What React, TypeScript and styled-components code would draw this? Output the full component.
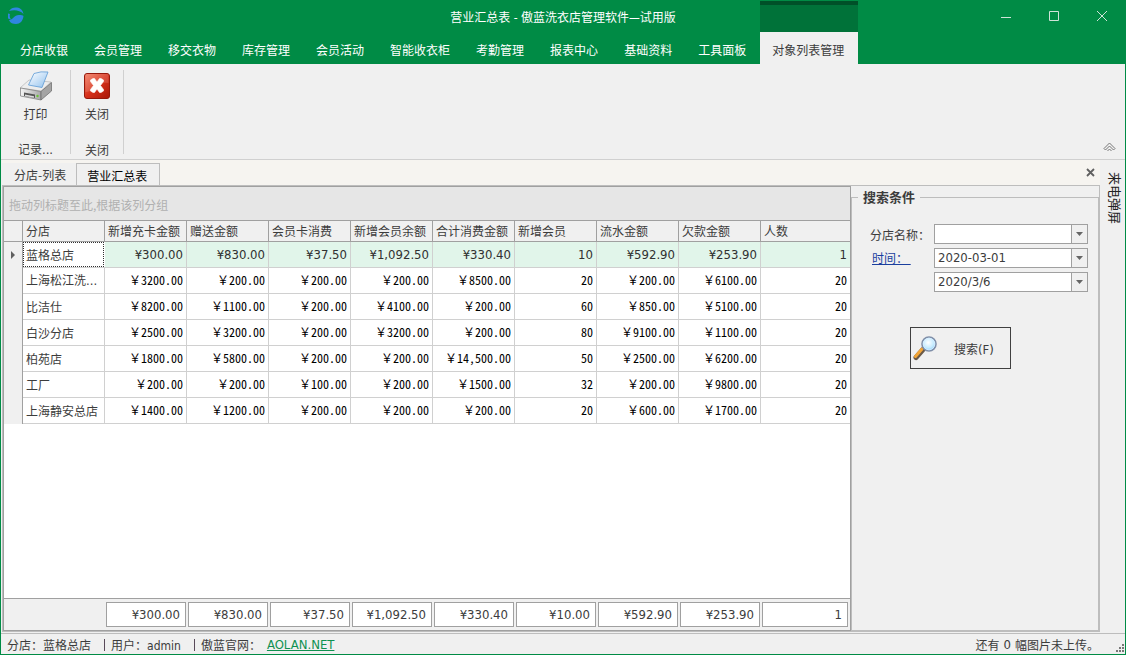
import React from "react";
import styled, { createGlobalStyle } from "styled-components";

const green = "#008b45";
const line = "#a0a0a0";
const softLine = "#bdbdbd";
const face = "#f0f0f0";
const cjk = `"Noto Sans CJK SC", sans-serif`;
const latin = `"DejaVu Sans Condensed", "Noto Sans CJK SC", sans-serif`;
const columnWidths = "82px 82px 82px 82px 82px 82px 82px 82px 1fr";

const GlobalStyle = createGlobalStyle`
  *, *::before, *::after { box-sizing: border-box; }
  body {
    margin: 0;
    background: ${face};
    color: #3c3c3c;
    font-family: ${cjk};
    font-size: 12px;
    line-height: 16px;
  }
  button, select { font: inherit; color: inherit; }
`;

const Window = styled.div`
  display: flex;
  flex-direction: column;
  min-height: 100vh;
  border: 1px solid ${green};
  border-top: 0;
  background: ${face};
`;

const TitleBar = styled.header`
  display: grid;
  grid-template-columns: 1fr auto 1fr;
  align-items: center;
  height: 32px;
  background: ${green};
  color: #fff;
`;

const Title = styled.h1`
  margin: 0;
  padding-top: 3px;
  font-family: ${latin};
  font-size: 12px;
  font-weight: 400;
`;

const WindowButtons = styled.div`
  display: flex;
  justify-content: flex-end;
`;

const WindowButton = styled.button`
  display: grid;
  place-items: center;
  width: 48px;
  height: 32px;
  padding: 0 0 0 2px;
  border: 0;
  background: transparent;
  color: #cfe3d8;
`;

const MenuBar = styled.nav`
  display: flex;
  height: 32px;
  padding-left: 7px;
  background: ${green};
`;

const MenuTab = styled.button<{ $active?: boolean }>`
  position: relative;
  padding: 4px 14px 0 12px;
  border: 0;
  white-space: nowrap;
  background: ${(p) => (p.$active ? face : "transparent")};
  color: ${(p) => (p.$active ? "#3c3c3c" : "#fff")};
  &::before {
    content: "";
    display: ${(p) => (p.$active ? "block" : "none")};
    position: absolute;
    left: 0;
    right: 0;
    bottom: 100%;
    height: 31px;
    border-top: 4px solid #005028;
    background: #007239;
  }
`;

const Ribbon = styled.section`
  display: flex;
  height: 96px;
  padding: 6px 0;
  border-bottom: 1px solid #d0d0d0;
`;

const RibbonGroup = styled.div<{ $width: number }>`
  display: flex;
  flex-direction: column;
  align-items: center;
  justify-content: space-between;
  width: ${(p) => p.$width}px;
  height: 84px;
  border-right: 1px solid #d0d0d0;
`;

const RibbonButton = styled.button`
  display: flex;
  flex-direction: column;
  align-items: center;
  gap: 4px;
  padding: 0;
  border: 0;
  background: transparent;
`;

const GroupCaption = styled.span`
  line-height: 8px;
`;

const CollapseButton = styled.button`
  align-self: flex-end;
  margin-left: auto;
  padding: 0 9px 0 0;
  border: 0;
  background: transparent;
  line-height: 0;
`;

const Middle = styled.div`
  display: flex;
  flex: 1;
`;

const Workspace = styled.main`
  display: flex;
  flex: 1;
  flex-direction: column;
  min-width: 0;
  padding: 0 1px 1px;
`;

const TabStrip = styled.div`
  display: flex;
  align-items: flex-end;
  height: 25px;
  background: #f6f4f0;
`;

const DocTab = styled.button<{ $active?: boolean }>`
  height: ${(p) => (p.$active ? 23 : 22)}px;
  margin-bottom: ${(p) => (p.$active ? -1 : 0)}px;
  padding: ${(p) => (p.$active ? "1px 12px 0 10px" : "2px 10px 0 12px")};
  border: solid ${softLine};
  border-width: ${(p) => (p.$active ? "1px 1px 0" : "0")};
  background: ${face};
  color: ${(p) => (p.$active ? "#000" : "#3c3c3c")};
  white-space: nowrap;
`;

const CloseTab = styled.button`
  align-self: center;
  margin-left: auto;
  padding: 0 5px 0 0;
  border: 0;
  background: transparent;
  line-height: 0;
`;

const Panels = styled.div`
  display: flex;
  flex: 1;
  border: 1px solid ${softLine};
`;

const GridPanel = styled.section`
  display: flex;
  flex: 1;
  flex-direction: column;
  min-width: 0;
  border: 1px solid ${line};
  background: #fff;
`;

const GroupHint = styled.div`
  height: 33px;
  padding: 10px 5px 0;
  background: #e6e6e6;
  color: #b0b0b0;
`;

const DataTable = styled.table`
  width: 100%;
  border-spacing: 0;
  border-top: 1px solid ${line};
  table-layout: fixed;
`;

const HeadCell = styled.th`
  height: 21px;
  padding: 0 3px;
  border-right: 1px solid ${line};
  border-bottom: 1px solid ${line};
  background: ${face};
  font-weight: 400;
  text-align: left;
  white-space: nowrap;
  &:last-child { border-right: 0; }
`;

const MarkCell = styled.td`
  padding: 0;
  border-right: 1px solid ${line};
  background: ${face};
  text-align: center;
  line-height: 0;
`;

const NameCell = styled.td<{ $focused?: boolean }>`
  height: 26px;
  padding: 0 0 0 ${(p) => (p.$focused ? 0 : 3)}px;
  border-right: ${(p) => (p.$focused ? "0" : "1px solid #d0d0d0")};
  border-bottom: 1px solid #d0d0d0;
  white-space: nowrap;
`;

const FocusFrame = styled.div`
  height: 25px;
  margin-right: 1px;
  padding: 4px 0 0 2px;
  border: 1px dotted #303030;
`;

const AmountCell = styled.td<{ $selected?: boolean }>`
  height: 26px;
  padding: 0 3px ${(p) => (p.$selected ? 0 : 1)}px 0;
  border-right: 1px solid #d0d0d0;
  border-bottom: 1px solid #d0d0d0;
  background: ${(p) => (p.$selected ? "#e1f5ea" : "#fff")};
  color: ${(p) => (p.$selected ? "#303030" : "#000")};
  font-family: ${(p) => (p.$selected ? latin : cjk)};
  font-size: ${(p) => (p.$selected ? 13 : 12)}px;
  font-feature-settings: ${(p) => (p.$selected ? "normal" : '"hwid"')};
  text-align: right;
  white-space: nowrap;
  &:last-child { border-right: 0; }
`;

const Yen = styled.span`
  font-feature-settings: normal;
`;

const SummaryBar = styled.div`
  display: grid;
  grid-template-columns: ${columnWidths};
  height: 32px;
  margin-top: auto;
  padding: 3px 1px 3px 101px;
  border-top: 1px solid ${line};
  background: ${face};
`;

const SummaryBox = styled.div`
  height: 25px;
  margin: 0 1px;
  padding: 4px 5px 0 0;
  border: 1px solid ${line};
  background: #fff;
  font-family: ${latin};
  font-size: 13px;
  text-align: right;
`;

const SearchPanel = styled.aside`
  display: flex;
  flex-direction: column;
  width: 248px;
`;

const SearchGroup = styled.fieldset`
  flex: 1;
  min-width: 0;
  margin: 3px 0 0;
  padding: 0 10px 0 6px;
  border: 1px solid ${softLine};
`;

const SearchTitle = styled.legend`
  padding: 0 5px;
  font-size: 13px;
  font-weight: 700;
`;

const Fields = styled.div`
  display: grid;
  grid-template-columns: 64px 1fr;
  row-gap: 4px;
  align-items: center;
  padding: 19px 0 0 12px;
`;

const FieldLabel = styled.label`
  padding-top: 2px;
  white-space: nowrap;
`;

const TimeLink = styled.a`
  justify-self: start;
  margin-left: 2px;
  color: #1a3f9e;
  text-decoration: underline;
  white-space: pre;
`;

const SelectFrame = styled.div`
  position: relative;
  grid-column: 2;
  height: 20px;
`;

const Select = styled.select`
  appearance: none;
  width: 100%;
  height: 20px;
  padding: 0 20px 0 3px;
  border: 1px solid ${line};
  border-radius: 0;
  background: #fff;
  font-family: ${latin};
  font-size: 13px;
`;

const SelectArrow = styled.span`
  position: absolute;
  top: 1px;
  right: 1px;
  bottom: 1px;
  display: grid;
  place-items: center;
  width: 16px;
  border-left: 1px solid ${line};
  background: ${face};
  pointer-events: none;
`;

const SearchButton = styled.button`
  display: flex;
  align-items: center;
  gap: 16px;
  width: 101px;
  height: 42px;
  margin: 35px 0 0 52px;
  padding: 0 0 0 1px;
  border: 1px solid #404040;
  background: ${face};
`;

const SearchText = styled.span`
  padding-top: 2px;
`;

const LatinText = styled.span<{ $size?: number }>`
  font-family: ${latin};
  font-size: ${(p) => p.$size ?? 13}px;
`;

const SideDock = styled.div`
  width: 24px;
  padding: 12px 0 0 6px;
`;

const DockTab = styled.button`
  padding: 0;
  border: 0;
  background: transparent;
  color: #222;
  font-size: 13px;
  line-height: 16px;
  writing-mode: vertical-rl;
  text-orientation: sideways;
`;

const StatusBar = styled.footer`
  display: flex;
  align-items: center;
  height: 21px;
  padding: 2px 0 0 6px;
  border-top: 1px solid ${softLine};
  white-space: nowrap;
`;

const StatusItem = styled.span`
  margin-right: 13px;
`;

const Separator = styled.i`
  width: 1px;
  height: 12px;
  margin-right: 6px;
  background: #5a4a5a;
`;

const SiteLink = styled.a`
  margin-left: 6px;
  color: #0f9150;
  font-family: ${latin};
  font-size: 13px;
`;

const Uploads = styled.span`
  display: flex;
  gap: 4px;
  margin-left: auto;
  margin-right: 17px;
`;

const Grip = styled.svg`
  align-self: flex-end;
  margin-bottom: 1px;
`;

const LogoMark = styled.svg`
  margin-left: 6px;
`;

const Logo = () => (
  <LogoMark width="18" height="18" viewBox="0 0 18 18" role="img" aria-label="傲蓝">
    <path d="M2 4C4 1 7 0 10 .500c4 .5 6 3.500 6.500 6.500C13 3 7 2.500 2 4Z" fill="#2f86e0" />
    <path d="M1 6.500v5l3 1C2.500 10.500 2.500 8.500 3 7Z" fill="#2f86e0" />
    <path d="M2 13C6 13 7 8 12 8c2 0 4 0 4.500 1-.5 5-3.500 8-7.500 8-3 0-6-1-7-4Z" fill="#2f86e0" />
  </LogoMark>
);

const PrinterIcon = () => (
  <svg width="34" height="32" viewBox="0 0 34 32" aria-hidden="true">
    <defs>
      <linearGradient id="paper" x1="0" y1="0" x2="1" y2="1">
        <stop offset="0" stopColor="#fff" />
        <stop offset=".45" stopColor="#cfe4f8" />
        <stop offset="1" stopColor="#8fc1ee" />
      </linearGradient>
      <linearGradient id="body" x1="0" y1="0" x2="1" y2="0">
        <stop offset="0" stopColor="#f4f4f4" />
        <stop offset="1" stopColor="#a8a8a8" />
      </linearGradient>
    </defs>
    <path d="M1 18 10 10l22 2-10 9Z" fill="#ededed" stroke="#aaa" strokeWidth=".6" />
    <path d="M1.500 18 22 21.500V30L1.500 26Z" fill="url(#body)" stroke="#777" strokeWidth=".7" />
    <path d="M22 21.500 32.500 12.500V21L22 30Z" fill="#a4a4a4" stroke="#666" strokeWidth=".7" />
    <path d="M9.500 15 15 3.500q7-2.500 14-1.500l-6 15.500Z" fill="url(#paper)" stroke="#5d9ad6" strokeWidth=".8" />
    <path d="m5 22.500 11 2v3.500L5 26Z" fill="#555" />
    <path d="m6 24.500 9 1.700v1.600L6 26Z" fill="#ddd" />
    <circle cx="18.500" cy="26" r="1.200" fill="#69c437" />
  </svg>
);

const CloseIcon = () => (
  <svg width="28" height="32" viewBox="0 0 28 32" aria-hidden="true">
    <defs>
      <linearGradient id="red" x1="0" y1="0" x2="1" y2="1">
        <stop offset="0" stopColor="#f27a5e" />
        <stop offset=".5" stopColor="#d6311b" />
        <stop offset="1" stopColor="#a81708" />
      </linearGradient>
    </defs>
    <rect x="1.500" y="3.500" width="25" height="25" rx="2.500" fill="url(#red)" stroke="#96190c" />
    <path d="M2.500 5q0-1 1-1h21q1 0 1 1v8Q16 12 11 18 7 22 2.500 22Z" fill="#fff" opacity=".14" />
    <path
      d="m7.500 10 2.500-1.500h1.500L14 12l2.500-3.500H18L20.500 10v1.500l-3 4 3 4V21L18 22.500h-1.500L14 19l-2.500 3.500H10L7.500 21v-1.500l3-4-3-4Z"
      fill="#fff"
      stroke="#fff"
      strokeWidth=".6"
      strokeLinejoin="round"
    />
  </svg>
);

const MagnifierIcon = () => (
  <svg width="26" height="26" viewBox="0 0 26 26" aria-hidden="true">
    <defs>
      <radialGradient id="lens" cx=".45" cy=".4" r=".65">
        <stop offset="0" stopColor="#fff" />
        <stop offset=".6" stopColor="#c4ebff" />
        <stop offset="1" stopColor="#7cc0f2" />
      </radialGradient>
    </defs>
    <path d="m4 22.500 7-8" stroke="#6b5a48" strokeWidth="5" strokeLinecap="round" />
    <path d="m3.500 21.500 6.500-7.500" stroke="#f3a536" strokeWidth="3" strokeLinecap="round" />
    <circle cx="17" cy="9" r="7" fill="url(#lens)" stroke="#7f8ea8" strokeWidth="1.600" />
    <circle cx="17" cy="9" r="5.800" fill="none" stroke="#d9efff" strokeWidth=".8" />
  </svg>
);

const menus = ["分店收银", "会员管理", "移交衣物", "库存管理", "会员活动", "智能收衣柜", "考勤管理", "报表中心", "基础资料", "工具面板"];
const columns = ["分店", "新增充卡金额", "赠送金额", "会员卡消费", "新增会员余额", "合计消费金额", "新增会员", "流水金额", "欠款金额", "人数"];
const selected = ["¥300.00", "¥830.00", "¥37.50", "¥1,092.50", "¥330.40", "10", "¥592.90", "¥253.90", "1"];
const rows = [
  ["上海松江洗...", "￥3200.00", "￥200.00", "￥200.00", "￥200.00", "￥8500.00", "20", "￥200.00", "￥6100.00", "20"],
  ["比洁仕", "￥8200.00", "￥1100.00", "￥200.00", "￥4100.00", "￥200.00", "60", "￥850.00", "￥5100.00", "20"],
  ["白沙分店", "￥2500.00", "￥3200.00", "￥200.00", "￥3200.00", "￥200.00", "80", "￥9100.00", "￥1100.00", "20"],
  ["柏苑店", "￥1800.00", "￥5800.00", "￥200.00", "￥200.00", "￥14,500.00", "50", "￥2500.00", "￥6200.00", "20"],
  ["工厂", "￥200.00", "￥200.00", "￥100.00", "￥200.00", "￥1500.00", "32", "￥200.00", "￥9800.00", "20"],
  ["上海静安总店", "￥1400.00", "￥1200.00", "￥200.00", "￥200.00", "￥200.00", "20", "￥600.00", "￥1700.00", "20"],
];
const totals = ["¥300.00", "¥830.00", "¥37.50", "¥1,092.50", "¥330.40", "¥10.00", "¥592.90", "¥253.90", "1"];

const Amount = ({ value }: { value: string }) =>
  value.startsWith("￥") ? (
    <>
      <Yen>￥</Yen>
      {value.slice(1)}
    </>
  ) : (
    <>{value}</>
  );

const Clipped = ({ text }: { text: string }) =>
  text.endsWith("...") ? (
    <>
      {text.slice(0, -3)}
      <LatinText>...</LatinText>
    </>
  ) : (
    <>{text}</>
  );

const DropDown = ({ id, label, value }: { id: string; label?: string; value: string }) => (
  <SelectFrame>
    <Select id={id} aria-label={label} defaultValue={value}>
      <option value={value}>{value}</option>
    </Select>
    <SelectArrow>
      <svg width="7" height="4" viewBox="0 0 7 4" aria-hidden="true">
        <path d="M0 0h7L3.500 4Z" fill="#666" />
      </svg>
    </SelectArrow>
  </SelectFrame>
);

export default function App() {
  return (
    <Window>
      <GlobalStyle />
      <TitleBar>
        <Logo />
        <Title>营业汇总表 - 傲蓝洗衣店管理软件—试用版</Title>
        <WindowButtons>
          <WindowButton aria-label="最小化">
            <svg width="10" height="10" viewBox="0 0 10 10"><path d="M0 6.500h10" stroke="currentColor" /></svg>
          </WindowButton>
          <WindowButton aria-label="最大化">
            <svg width="10" height="10" viewBox="0 0 10 10"><path d="M.5.5h9v9h-9Z" fill="none" stroke="currentColor" /></svg>
          </WindowButton>
          <WindowButton aria-label="关闭窗口">
            <svg width="10" height="10" viewBox="0 0 10 10"><path d="m0 0 10 10M10 0 0 10" stroke="currentColor" /></svg>
          </WindowButton>
        </WindowButtons>
      </TitleBar>
      <MenuBar>
        {menus.map((m) => (
          <MenuTab key={m}>{m}</MenuTab>
        ))}
        <MenuTab $active>对象列表管理</MenuTab>
      </MenuBar>
      <Ribbon>
        <RibbonGroup $width={70}>
          <RibbonButton>
            <PrinterIcon />
            打印
          </RibbonButton>
          <GroupCaption>
            <Clipped text="记录..." />
          </GroupCaption>
        </RibbonGroup>
        <RibbonGroup $width={53}>
          <RibbonButton>
            <CloseIcon />
            关闭
          </RibbonButton>
          <GroupCaption>关闭</GroupCaption>
        </RibbonGroup>
        <CollapseButton aria-label="折叠功能区">
          <svg width="13" height="12" viewBox="0 0 13 12">
            <path d="m1 7.500 5.500-5.500L12 7.500 10.500 9l-4-4-4 4ZM4.500 10l2-2 2 2" fill="none" stroke="#777" />
          </svg>
        </CollapseButton>
      </Ribbon>
      <Middle>
        <Workspace>
          <TabStrip>
            <DocTab>分店-列表</DocTab>
            <DocTab $active>营业汇总表</DocTab>
            <CloseTab aria-label="关闭标签">
              <svg width="9" height="9" viewBox="0 0 9 9"><path d="m1 1 7 7M8 1 1 8" stroke="#606060" strokeWidth="1.800" /></svg>
            </CloseTab>
          </TabStrip>
          <Panels>
            <GridPanel>
              <GroupHint>拖动列标题至此,根据该列分组</GroupHint>
              <DataTable>
                <colgroup>
                  <col width="19" />
                  {columns.slice(1).map((c) => (
                    <col key={c} width="82" />
                  ))}
                  <col />
                </colgroup>
                <thead>
                  <tr>
                    <HeadCell aria-label="当前行" />
                    {columns.map((c) => (
                      <HeadCell key={c} scope="col">{c}</HeadCell>
                    ))}
                  </tr>
                </thead>
                <tbody>
                  <tr>
                    <MarkCell>
                      <svg width="4" height="8" viewBox="0 0 4 8"><path d="M0 0v8l4-4Z" fill="#606060" /></svg>
                    </MarkCell>
                    <NameCell $focused>
                      <FocusFrame>蓝格总店</FocusFrame>
                    </NameCell>
                    {selected.map((v, i) => (
                      <AmountCell key={i} $selected>{v}</AmountCell>
                    ))}
                  </tr>
                  {rows.map(([name, ...amounts]) => (
                    <tr key={name}>
                      <MarkCell />
                      <NameCell>
                        <Clipped text={name} />
                      </NameCell>
                      {amounts.map((v, i) => (
                        <AmountCell key={i}>
                          <Amount value={v} />
                        </AmountCell>
                      ))}
                    </tr>
                  ))}
                </tbody>
              </DataTable>
              <SummaryBar>
                {totals.map((v, i) => (
                  <SummaryBox key={i}>{v}</SummaryBox>
                ))}
              </SummaryBar>
            </GridPanel>
            <SearchPanel>
              <SearchGroup>
                <SearchTitle>搜索条件</SearchTitle>
                <Fields>
                  <FieldLabel htmlFor="branch">分店名称：</FieldLabel>
                  <DropDown id="branch" value="" />
                  <TimeLink href="#time">{"时间： "}</TimeLink>
                  <DropDown id="from" label="开始时间" value="2020-03-01" />
                  <DropDown id="to" label="结束时间" value="2020/3/6" />
                </Fields>
                <SearchButton>
                  <MagnifierIcon />
                  <SearchText>
                    搜索<LatinText>(F)</LatinText>
                  </SearchText>
                </SearchButton>
              </SearchGroup>
            </SearchPanel>
          </Panels>
        </Workspace>
        <SideDock>
          <DockTab>来电弹屏</DockTab>
        </SideDock>
      </Middle>
      <StatusBar>
        <StatusItem>分店：蓝格总店</StatusItem>
        <Separator />
        <StatusItem>
          用户：<LatinText $size={12}>admin</LatinText>
        </StatusItem>
        <Separator />
        <span>傲蓝官网：</span>
        <SiteLink href="#aolan">AOLAN.NET</SiteLink>
        <Uploads>
          <span>还有</span>
          <LatinText>0</LatinText>
          <span>幅图片未上传。</span>
        </Uploads>
        <Grip width="9" height="9" viewBox="0 0 9 9" aria-hidden="true">
          <path d="M6 0h2v2H6ZM3 3h2v2H3ZM6 3h2v2H6ZM0 6h2v2H0ZM3 6h2v2H3ZM6 6h2v2H6Z" fill="#777" />
        </Grip>
      </StatusBar>
    </Window>
  );
}
